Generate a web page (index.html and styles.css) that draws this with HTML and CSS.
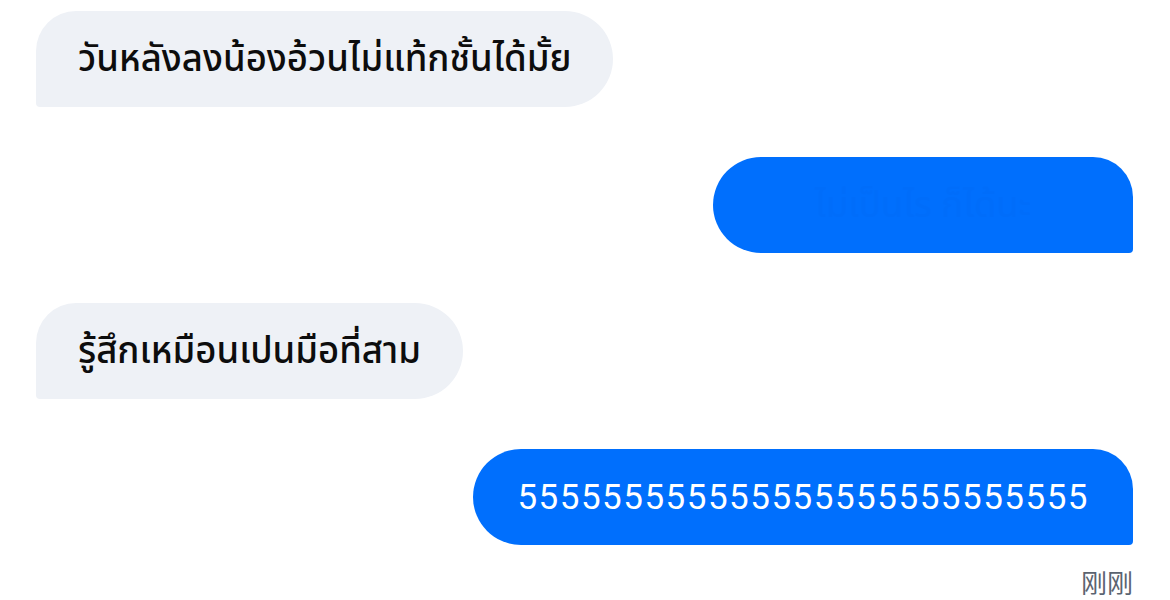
FILE: index.html
```html
<!DOCTYPE html>
<html lang="th">
<head>
<meta charset="utf-8">
<link rel="stylesheet" href="styles.css">
</head>
<body>
<div class="chat">
  <div class="row in"><div class="bubble bubble-in">วันหลังลงน้องอ้วนไม่แท้กชั้นได้มั้ย</div></div>
  <div class="row out"><div class="bubble bubble-out hidden-text">ไม่เป็นไร ก็ได้นะ</div></div>
  <div class="row in"><div class="bubble bubble-in">รู้สึกเหมือนเปนมือที่สาม</div></div>
  <div class="row out"><div class="bubble bubble-out digits">555555555555555555555555555</div></div>
  <div class="row out"><div class="time">刚刚</div></div>
</div>
</body>
</html>
```

FILE: styles.css
```css
html, body {
  margin: 0;
  padding: 0;
  background: #ffffff;
}
.chat {
  display: flex;
  flex-direction: column;
  gap: 50px;
  padding: 11px 37px 0 36px;
  font-family: "Noto Sans Thai", "Noto Sans", Roboto, sans-serif;
}
.row {
  display: flex;
}
.row.in { justify-content: flex-start; }
.row.out { justify-content: flex-end; }
.bubble {
  height: 96px;
  box-sizing: border-box;
  display: flex;
  align-items: center;
  padding: 0 42px;
  font-size: 36.5px;
  font-weight: 500;
  white-space: nowrap;
}
.bubble-in {
  background: #eef1f6;
  color: #0d0d0d;
  border-radius: 40px 48px 48px 4px;
}
.bubble-out {
  background: #006ffd;
  color: #ffffff;
  border-radius: 48px 40px 4px 48px;
}
.hidden-text {
  color: #006dfa;
  font-weight: 400;
  width: 420px;
  justify-content: center;
}
.digits {
  font-family: Roboto, "Noto Sans", sans-serif;
  font-size: 35px;
  font-weight: 400;
  letter-spacing: 1.5px;
  padding: 0 44px 0 44px;
}
.time {
  margin-top: -32px;
  font-family: "Noto Sans CJK SC", sans-serif;
  font-size: 26px;
  color: #5b6370;
}
```
